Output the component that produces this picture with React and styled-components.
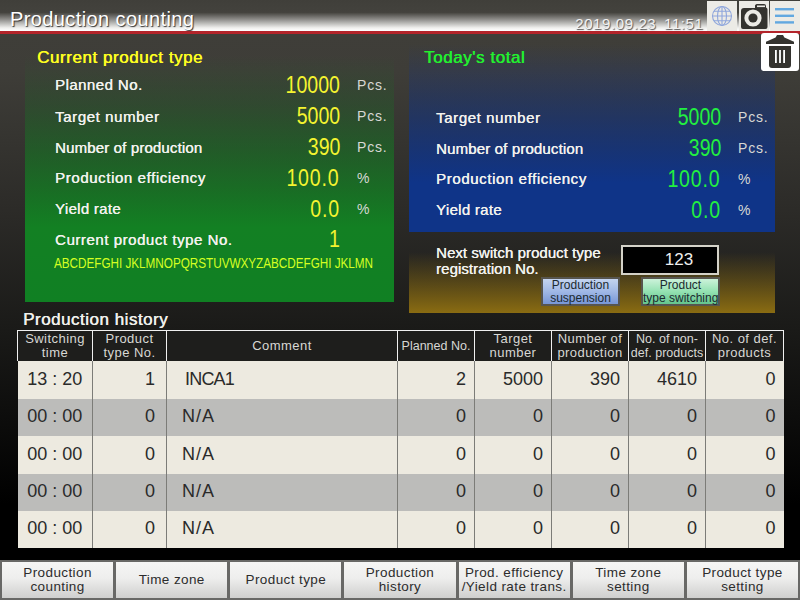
import React from "react";
import styled, { createGlobalStyle } from "styled-components";

const Global = createGlobalStyle`
  html, body { margin: 0; padding: 0; background: #000; }
  body { font-family: "Liberation Sans", Arial, sans-serif; }
  * { box-sizing: border-box; }
`;
const Page = styled.div`
  position: relative; width: 800px; height: 600px; overflow: hidden;
  display: flex; flex-direction: column;
  background: linear-gradient(180deg, #403f3a 0%, #3e3d38 12%, #2c2b28 35%, #1a1a18 55%, #000 84%, #000 100%);
`;
const Header = styled.header`
  height: 34px; flex: none; display: flex; align-items: flex-start; justify-content: space-between;
  border-bottom: 3px solid #b3242a;
  background: linear-gradient(180deg, #403f3a 0%, #43423d 40%, #8c8b88 62%, #f0f0ee 90%, #ffffff 100%);
`;
const Title = styled.h1`
  margin: 7px 0 0 10px; font-size: 20px; line-height: 24px; font-weight: 400; color: #fff;
  letter-spacing: 0.4px; text-shadow: 1px 1px 1px #333;
`;
const HeaderRight = styled.div`display: flex; align-items: flex-start;`;
const Clock = styled.div`
  margin: 16px 2px 0 0; font-size: 15px; line-height: 16px; color: #f2f2f2; letter-spacing: 0.6px;
  word-spacing: 3px; text-shadow: 1px 1px 1px #555;
`;
const IconBtn = styled.button`
  width: 30px; height: 30px; margin: 1px 0 0 1.5px; padding: 0; border: 0; display: flex; align-items: center; justify-content: center;
  background: #ecebe6;
`;
const TrashBtn = styled.button`
  position: absolute; top: 33px; right: 1px; width: 38px; height: 38px; padding: 0; border: 0; border-radius: 3px;
  background: #fff; display: flex; align-items: center; justify-content: center;
`;
const Top = styled.main`
  height: 279px; flex: none; display: flex; padding-left: 25px; gap: 15px;
`;
const GreenPanel = styled.section`
  width: 369px; height: 268px; padding: 14px 0 0 12px;
  background: linear-gradient(180deg, rgba(16,128,32,0) 8%, rgba(16,128,32,0.22) 26%, #138023 72%, #108023 100%);
`;
const RightCol = styled.section`width: 366px; display: flex; flex-direction: column;`;
const BluePanel = styled.div`
  height: 198px; padding: 14px 0 0 15px;
  background: linear-gradient(180deg, rgba(16,50,140,0) 5%, rgba(16,50,140,0.25) 22%, #0f3488 75%, #0f3488 100%);
`;
const YellowPanel = styled.div`
  height: 81px; position: relative; display: grid; grid-template-columns: 185px 98px;
  padding: 13px 0 0 27px;
  background: linear-gradient(180deg, rgba(120,95,16,0) 25%, #8a6c12 100%);
`;
const SectionTitle = styled.h2`
  margin: 0; font-size: 17px; line-height: 20px; font-weight: 400; color: ${p => p.$c}; letter-spacing: 0.55px;
  text-shadow: 0.4px 0 0 ${p => p.$c};
`;
const Rows = styled.div`
  margin-top: ${p => p.$top}px; padding-left: ${p => p.$left}px; display: flex; flex-direction: column;
`;
const Row = styled.div`
  height: ${p => p.$h}px; display: grid; grid-template-columns: 200px 85px 1fr; align-items: center;
`;
const Label = styled.span`font-size: 15px; color: #f2f2ee; letter-spacing: ${p => p.$sp}px; text-shadow: 0.3px 0 0 #f2f2ee;`;
const Value = styled.span`
  justify-self: end; transform: scaleX(0.85); transform-origin: right center;
  font-size: 23px; line-height: 30px; color: ${p => p.$c}; letter-spacing: ${p => p.$sp}px;
`;
const Unit = styled.span`font-size: 14px; color: #d8d8d4; padding-left: 17px; letter-spacing: 0.8px;`;
const Marquee = styled.div`
  margin: 0 0 0 17px; transform: scaleX(0.84); transform-origin: left center;
  font-size: 14px; line-height: 18px; color: #d4ff22; letter-spacing: -0.05px; white-space: pre;
`;
const NextLabel = styled.div`font-size: 15px; line-height: 15.5px; color: #f2f2ee; letter-spacing: 0.05px; text-shadow: 0.3px 0 0 #f2f2ee;`;
const NextValue = styled.div`
  height: 30px; border: 2px solid #d4d2c8; background: #000; color: #eee; font-size: 17px; padding-left: 18px;
  display: flex; align-items: center; justify-content: center;
`;
const ActionRow = styled.div`
  position: absolute; left: 132px; top: 45px; display: flex; gap: 21px;
`;
const ActionBtn = styled.button`
  width: 79px; height: 29px; padding: 0; border: 2px solid #57554e; color: #1c2a30; font: 12px/12.5px "Liberation Sans", sans-serif; white-space: nowrap;
  background: ${p => p.$bg};
`;
const History = styled.section`padding: 0 17px; flex: none;`;
const HistoryTitle = styled.h2`
  margin: -3px 0 0 6px; font-size: 17px; line-height: 20px; height: 20px; font-weight: 400; color: #f0f0ec; letter-spacing: 0.5px; text-shadow: 0.4px 0 0 #f0f0ec;
`;
const Table = styled.table`
  width: 766px; border-collapse: collapse; table-layout: fixed;
`;
const Th = styled.th`
  height: 30px; padding: 0; border: 1px solid #f0f0f0; border-bottom: 0; background: #1e1e1c; color: #d8d8d4;
  font-size: ${p => p.$tight ? 12.5 : 13}px; line-height: 14px; font-weight: 400; letter-spacing: ${p => p.$tight ? 0 : 0.45}px; text-align: center; white-space: nowrap;
`;
const Tr = styled.tr`
  height: ${p => p.$h}px; background: ${p => p.$alt ? "#bcbcba" : "#edeae0"};
`;
const Td = styled.td`
  padding: 0 ${p => p.$pr}px 1px ${p => p.$pl ?? 0}px; border-left: 1px solid #7c7c78; color: #2a2a2a;
  font-size: 18px; text-align: ${p => p.$align || "right"}; letter-spacing: ${p => p.$sp ?? 0}px;
  &:first-child { border-left: 0; }
`;
const Nav = styled.nav`
  margin-top: 12px; height: 40px; flex: none; background: #686866; padding: 2px; display: grid; grid-template-columns: repeat(7, 1fr); gap: 3px;
`;
const NavBtn = styled.button`
  padding: 0; border: 0; color: #2c2c2c; font: 13.5px/14px "Liberation Sans", sans-serif; letter-spacing: 0.4px;
  background: linear-gradient(180deg, #f6f6f5 0%, #eeeeed 45%, #cfcfce 100%); white-space: nowrap;
`;

const Globe = () => (
  <svg width="22" height="22" viewBox="0 0 22 22" fill="none" stroke="#8fa6dc" strokeWidth="1.1">
    <circle cx="11" cy="11" r="9.5" /><ellipse cx="11" cy="11" rx="4.5" ry="9.5" /><path d="M11 1.5v19M1.5 11h19M3 6.2h16M3 15.8h16" />
  </svg>
);
const Camera = () => (
  <svg width="28" height="28" viewBox="0 0 28 28">
    <path d="M15 3.5a2 2 0 0 1 2-1.5h7a2 2 0 0 1 2 2v1.5a2 2 0 0 1 1.5 2V25a2 2 0 0 1-2 2H3a2 2 0 0 1-2-2V9a3 3 0 0 1 3-3h11z" fill="#34332f" />
    <rect x="17" y="3.5" width="8" height="1.6" fill="#ecebe6" />
    <circle cx="13" cy="16" r="8.6" fill="#ecebe6" /><circle cx="13" cy="16" r="4.6" fill="#34332f" />
  </svg>
);
const Menu = () => (
  <svg width="20" height="18" viewBox="0 0 20 18" fill="#62a8e0">
    <rect y="1" width="19" height="2.4" /><rect y="7.6" width="19" height="2.4" /><rect y="14.2" width="19" height="2.4" />
  </svg>
);
const Trash = () => (
  <svg width="30" height="34" viewBox="0 0 30 34" fill="#34332f">
    <path d="M12 0h6l1.4 2.4 L29 6.8 V9 H1 V6.8 L10.6 2.4z" />
    <path d="M4 11h22v19a3 3 0 0 1-3 3H7a3 3 0 0 1-3-3z" />
    <rect x="10" y="15" width="1.8" height="13" fill="#fff" /><rect x="14.1" y="15" width="1.8" height="13" fill="#fff" /><rect x="18.2" y="15" width="1.8" height="13" fill="#fff" />
  </svg>
);

const leftRows = [
  ["Planned No.", "10000", "Pcs.", 0.45],
  ["Target number", "5000", "Pcs.", 0.6],
  ["Number of production", "390", "Pcs.", 0.15],
  ["Production efficiency", "100.0", "%", 0.6],
  ["Yield rate", "0.0", "%", 0.3],
];
const rows = [
  ["13 : 20", "1", "INCA1", "2", "5000", "390", "4610", "0"],
  ["00 : 00", "0", "N/A", "0", "0", "0", "0", "0"],
  ["00 : 00", "0", "N/A", "0", "0", "0", "0", "0"],
  ["00 : 00", "0", "N/A", "0", "0", "0", "0", "0"],
  ["00 : 00", "0", "N/A", "0", "0", "0", "0", "0"],
];
const heads = [
  [75, "Switching", "time"], [74, "Product", "type No."], [231, "Comment"], [77, "Planned No."],
  [77, "Target", "number"], [77, "Number of", "production"], [77, "No. of non-", "def. products"], [78, "No. of def.", "products"],
];
const heights = [38, 37, 38, 37, 37];
const navs = [
  ["Production", "counting"], ["Time zone"], ["Product type"], ["Production", "history"],
  ["Prod. efficiency", "/Yield rate trans."], ["Time zone", "setting"], ["Product type", "setting"],
];
const pitch = [31, 32, 30, 31, 31, 30];
const lines = a => a.map((t, i) => <React.Fragment key={i}>{i > 0 && <br />}{t}</React.Fragment>);
const valueSpacing = v => (v.includes(".") ? 1 : 0);

export default function App() {
  return (
    <Page>
      <Global />
      <Header>
        <Title>Production counting</Title>
        <HeaderRight>
          <Clock>2019.09.23 11:51</Clock>
          <IconBtn><Globe /></IconBtn>
          <IconBtn><Camera /></IconBtn>
          <IconBtn><Menu /></IconBtn>
        </HeaderRight>
      </Header>
      <TrashBtn><Trash /></TrashBtn>
      <Top>
        <GreenPanel>
          <SectionTitle $c="#ffff20">Current product type</SectionTitle>
          <Rows $top={1} $left={18}>
            {leftRows.map((r, i) => (
              <Row key={r[0]} $h={pitch[i]}>
                <Label $sp={r[3]}>{r[0]}</Label><Value $c="#f4f430" $sp={valueSpacing(r[1])}>{r[1]}</Value><Unit>{r[2]}</Unit>
              </Row>
            ))}
            <Row $h={30}>
              <Label $sp={0.55}>Current product type No.</Label><Value $c="#f4f430" $sp={0}>1</Value>
            </Row>
          </Rows>
          <Marquee>ABCDEFGHI JKLMNOPQRSTUVWXYZABCDEFGHI JKLMN</Marquee>
        </GreenPanel>
        <RightCol>
          <BluePanel>
            <SectionTitle $c="#22f030">Today's total</SectionTitle>
            <Rows $top={33} $left={12}>
              {leftRows.slice(1).map((r, i) => (
                <Row key={r[0]} $h={pitch[i + 1]}>
                  <Label $sp={r[3]}>{r[0]}</Label><Value $c="#22f040" $sp={valueSpacing(r[1])}>{r[1]}</Value><Unit>{r[2]}</Unit>
                </Row>
              ))}
            </Rows>
          </BluePanel>
          <YellowPanel>
            <NextLabel>Next switch product type<br />registration No.</NextLabel>
            <NextValue>123</NextValue>
            <ActionRow>
              <ActionBtn $bg="linear-gradient(180deg,#c4d4f0 0%,#a0b8e6 50%,#7796d6 100%)">Production<br />suspension</ActionBtn>
              <ActionBtn $bg="linear-gradient(180deg,#ccf2da 0%,#94e2b2 50%,#64c48c 100%)">Product<br />type switching</ActionBtn>
            </ActionRow>
          </YellowPanel>
        </RightCol>
      </Top>
      <History>
        <HistoryTitle>Production history</HistoryTitle>
        <Table>
          <colgroup>{heads.map((h, i) => <col key={i} width={h[0]} />)}</colgroup>
          <thead>
            <tr>{heads.map((h, i) => <Th key={i} $tight={i === 3 || i === 6}>{lines(h.slice(1))}</Th>)}</tr>
          </thead>
          <tbody>
            {rows.map((r, i) => (
              <Tr key={i} $alt={i % 2 === 1} $h={heights[i]}>
                {r.map((c, j) => (
                  j === 0 ? <Td key={j} $align="center" $pr={0}>{c}</Td>
                  : j === 2 ? <Td key={j} $align="left" $pl={i === 0 ? 18 : 15} $pr={0} $sp={i === 0 ? -0.8 : 1}>{c}</Td>
                  : <Td key={j} $pr={j === 1 ? 11 : 8}>{c}</Td>
                ))}
              </Tr>
            ))}
          </tbody>
        </Table>
      </History>
      <Nav>
        {navs.map((n, i) => <NavBtn key={i}>{lines(n)}</NavBtn>)}
      </Nav>
    </Page>
  );
}
